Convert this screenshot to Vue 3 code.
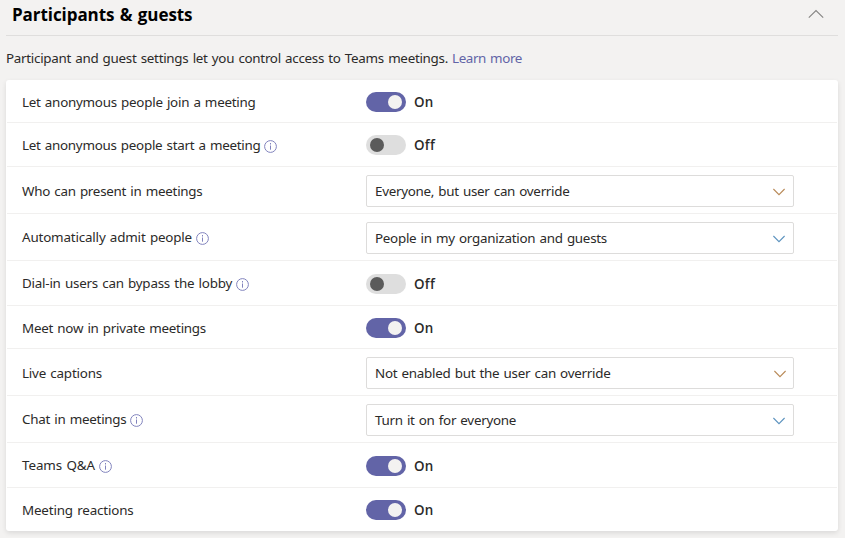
<script setup>
import { ref } from 'vue'

const open = ref(true)

const rows = ref([
  { label: 'Let anonymous people join a meeting', width: 233.5, height: 43, top: 12, on: true },
  { label: 'Let anonymous people start a meeting', width: 238.5, height: 44, top: 12, on: false, info: true, drop: 1 },
  { label: 'Who can present in meetings', width: 180.5, height: 47, top: 14, value: 'Everyone, but user can override', valueWidth: 194.5, tint: 'amber' },
  { label: 'Automatically admit people', width: 170, height: 47, top: 13, value: 'People in my organization and guests', valueWidth: 232, info: true, drop: 1.5 },
  { label: 'Dial-in users can bypass the lobby', width: 210, height: 45, top: 12, on: false, info: true, drop: 1.5 },
  { label: 'Meet now in private meetings', width: 184, height: 43, top: 12, on: true },
  { label: 'Live captions', width: 80, height: 47, top: 14, value: 'Not enabled but the user can override', valueWidth: 235.5, tint: 'amber', shift: true },
  { label: 'Chat in meetings', width: 104.5, height: 47, top: 13, value: 'Turn it on for everyone', valueWidth: 141, info: true, drop: 1.5 },
  { label: 'Teams Q&A', width: 73, height: 45, top: 12, on: true, info: true, drop: 1.5 },
  { label: 'Meeting reactions', width: 111.5, height: 43, top: 12, on: true },
])

// Tracks text out or in so that it fills the given measure.
const vFit = {
  mounted(el, { value }) {
    const natural = el.getBoundingClientRect().width
    el.style.letterSpacing = `${(value - natural) / el.textContent.length}px`
  },
}
</script>

<template>
  <section class="panel">
    <header class="head">
      <h2><span v-fit="180.5">Participants &amp; guests</span></h2>
      <button class="collapse" type="button" :aria-expanded="open" @click="open = !open">
        <svg width="16" height="10" viewBox="0 0 16 10"><path d="M.8 8.7 8 1.5l7.2 7.2" /></svg>
      </button>
    </header>
    <p class="intro">
      <span v-fit="442">Participant and guest settings let you control access to Teams meetings.</span>
      <a href="#" v-fit="70">Learn more</a>
    </p>
    <div v-if="open" class="card">
      <div v-for="row in rows" :key="row.label" class="row" :style="{ height: row.height + 'px' }">
        <div class="label" :style="{ paddingTop: row.top + 'px' }">
          <span v-fit="row.width">{{ row.label }}</span>
          <svg v-if="row.info" class="info" :style="{ marginTop: row.drop * 2 + 'px' }" width="13" height="13" viewBox="0 0 13 13">
            <circle cx="6.5" cy="6.5" r="5.9" />
            <path d="M6.5 5.5v4.2M6.5 3v1.5" />
          </svg>
        </div>
        <div v-if="row.value" class="select">
          <span v-fit="row.valueWidth">{{ row.value }}</span>
          <svg class="chevron" :class="[row.tint, { shift: row.shift }]" width="12" height="8" viewBox="0 0 12 8">
            <path d="M.4 1 6 6.6 11.6 1" />
          </svg>
        </div>
        <div v-else class="toggle" :class="{ on: row.on, low: row.height === 45 }" @click="row.on = !row.on">
          <span class="track"><span class="knob"></span></span>
          <span :key="row.on" v-fit="row.on ? 19.5 : 21" class="state">{{ row.on ? 'On' : 'Off' }}</span>
        </div>
      </div>
    </div>
  </section>
</template>

<style>
body {
  background: #f3f2f1;
  overflow: hidden;
}
</style>

<style scoped>
.panel {
  height: 538px;
  padding: 0 7px 0 6px;
  box-sizing: border-box;
  background: #f3f2f1;
  color: #2b2a29;
  font: 13.4px/20px "Noto Sans", "Open Sans", sans-serif;
  word-spacing: 1px;
  white-space: nowrap;
}
.head {
  display: flex;
  justify-content: space-between;
  align-items: flex-start;
  height: 36px;
  box-sizing: border-box;
  padding: 3px 14px 0 6px;
  border-bottom: 1px solid #dfdedd;
}
h2 {
  margin: 0;
  color: #000;
  font-family: "Open Sans", "Noto Sans", sans-serif;
  font-size: 17px;
  line-height: 24px;
  font-weight: 700;
}
.collapse {
  display: flex;
  margin: 6px 0 0;
  padding: 0;
  border: 0;
  background: none;
}
.collapse path {
  fill: none;
  stroke: #858483;
  stroke-width: 1.1;
}
.intro {
  display: flex;
  gap: 4px;
  margin: 0;
  padding: 12px 0;
}
.intro a {
  color: #6264a7;
  text-decoration: none;
}
.card {
  height: 451px;
  border-radius: 3px;
  background: #fff;
  box-shadow: 0 2px 5px rgba(0, 0, 0, .1);
}
.row {
  display: flex;
  align-items: flex-start;
  box-sizing: border-box;
  margin: 0 1px;
  padding-left: 15px;
  border-bottom: 1px solid #f1f0ef;
}
.row:last-child {
  border-bottom: 0;
}
.label {
  display: flex;
  align-items: center;
  width: 344px;
  height: 20px;
}
.info {
  margin-left: 3.5px;
  fill: none;
  stroke: #8183bd;
  stroke-width: 1;
}
.select {
  display: flex;
  align-items: center;
  justify-content: space-between;
  box-sizing: border-box;
  width: 428px;
  height: 32px;
  margin-top: 8px;
  padding: 0 8px;
  border: 1px solid #dddcdb;
  border-radius: 2px;
}
.chevron {
  margin-top: 1px;
  fill: none;
  stroke: #5d93bf;
  stroke-width: 1.1;
}
.chevron.amber {
  stroke: #b98a58;
}
.chevron.shift {
  margin-right: -1px;
}
.toggle {
  display: flex;
  align-items: center;
  gap: 8px;
  height: 20px;
  margin-top: 12px;
}
.toggle.low {
  margin-top: 13px;
}
.track {
  display: flex;
  align-items: center;
  box-sizing: border-box;
  width: 40px;
  height: 20px;
  padding: 0 4px;
  border-radius: 10px;
  background: #dedede;
}
.knob {
  width: 14px;
  height: 14px;
  border-radius: 50%;
  background: #5b5b5b;
}
.on .track {
  justify-content: flex-end;
  background: #6264a7;
}
.on .knob {
  background: #f3f2f1;
}
.state {
  font-family: "Open Sans", "Noto Sans", sans-serif;
  font-weight: 600;
}
</style>
